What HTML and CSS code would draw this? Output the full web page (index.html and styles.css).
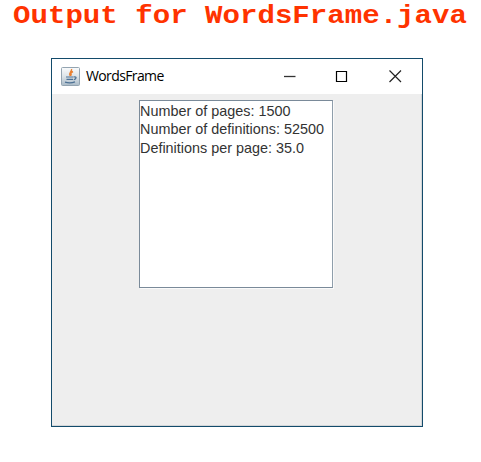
FILE: index.html
```html
<!DOCTYPE html>
<html lang="en">
<head>
<meta charset="utf-8">
<title>WordsFrame</title>
<link rel="stylesheet" href="styles.css">
</head>
<body>
<h1 class="heading">Output for WordsFrame.java</h1>
<main class="window">
  <header class="titlebar">
    <svg class="app-icon" viewBox="0 0 19 19" width="19" height="19" fill="none">
      <defs><linearGradient id="tile" x2="0" y2="1"><stop stop-color="#fafbfc"/><stop offset=".5" stop-color="#dce3e8"/><stop offset="1" stop-color="#a9bac7"/></linearGradient></defs>
      <rect x=".5" y=".5" width="18" height="18" rx="1" fill="url(#tile)" stroke="#94a4b1"/>
      <path d="M10.500 2c1 2.200-3.300 3.300-1.300 7M12 4.500c-2.400 1.200-2.600 2.300-1.500 4" stroke="#e98032" stroke-width="1.400"/>
      <path d="M5 10h7.500M5.500 12.300h6.500M4 15.200c3 .8 7 .8 10-.3M12.800 10c3.500-.6 2.500 2.300 0 2.700" stroke="#4d7194" stroke-width="1.200"/>
    </svg>
    <span class="title">WordsFrame</span>
    <svg class="controls" viewBox="0 0 118 13" width="118" height="13" fill="none">
      <path d="M0 6.500h11.500" stroke="#333" stroke-width="1.300"/>
      <path d="M52.500 1.500h10v10h-10z" stroke="#000" stroke-width="1.200"/>
      <path d="M105.500.5l11.500 11.500M117 .5l-11.500 11.500" stroke="#222" stroke-width="1.200"/>
    </svg>
  </header>
  <section class="content">
    <div class="textarea"><p>Number of pages: 1500</p><p>Number of definitions: 52500</p><p>Definitions per page: 35.0</p></div>
  </section>
</main>
</body>
</html>
```
FILE: styles.css
```css
body { margin: 0; background: #fff; overflow: hidden; }
.heading { width: max-content; margin: 0 0 0 12.800px; height: 58px; color: #ff3300; font: bold 26px/32px "Liberation Mono", monospace; white-space: nowrap; transform: scaleX(1.119); transform-origin: left top; }
.window { box-sizing: border-box; width: 372px; height: 369px; margin-left: 51px; border: 1px solid #134b6b; background: #eee; box-shadow: inset -1px -1px #d3d6d8; }
.titlebar { display: flex; align-items: center; height: 35px; padding: 0 20px 0 9px; background: #fff; }
.title { margin-left: 6px; padding-bottom: 1px; color: #000; font: 14px/20px "Open Sans", sans-serif; letter-spacing: -0.620px; }
.controls { margin-left: auto; }
.content { display: flex; padding: 6px 0 0 87px; }
.textarea { box-sizing: border-box; width: 194px; height: 188px; padding-top: 1px; border: 1px solid #7a8a99; border-right-color: #8f9eab; background: #fff; box-shadow: 1px 1px #fafafa; color: #333; font: 14.400px/18.400px "Liberation Sans", sans-serif; white-space: nowrap; }
.textarea p { margin: 0; }
```
